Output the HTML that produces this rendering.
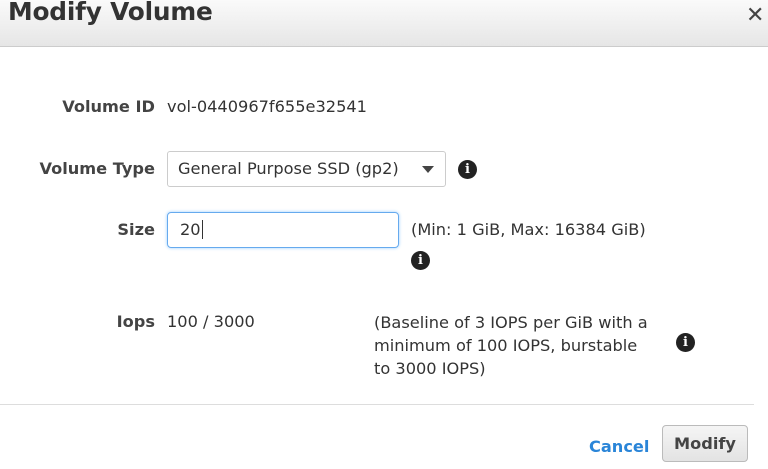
<!DOCTYPE html>
<html><head><style>
body{margin:0;width:768px;height:469px;background:#fff;font-family:"DejaVu Sans","Liberation Sans",sans-serif;color:#333;position:relative;overflow:hidden;font-size:16.2px}
.hdr{position:absolute;left:0;top:0;width:768px;height:46px;background:linear-gradient(#fafafa,#e6e6e6);border-bottom:1px solid #ccc}
.hdr h1{margin:0;position:absolute;left:8px;top:-3px;font-size:24.8px;font-weight:bold;color:#333;letter-spacing:-0.2px}
.x{position:absolute;left:746px;top:3px;font-size:22px;color:#444}
.a{position:absolute;white-space:nowrap}
.lbl{position:absolute;right:613px;font-weight:bold;color:#444;white-space:nowrap}
.sel{position:absolute;left:167px;top:151px;width:279px;height:36px;border:1px solid #ccc;border-radius:3px;box-sizing:border-box}
.inp{position:absolute;left:167px;top:212px;width:232px;height:36px;border:1px solid #66aaee;border-radius:4px;box-sizing:border-box;box-shadow:0 0 3px #9cf}
.i{position:absolute;width:19px;height:19px;border-radius:50%;background:#222;color:#fff;font:bold 13px "DejaVu Serif",serif;text-align:center;line-height:19px}
.btn{position:absolute;left:662px;top:425px;width:86px;height:37px;border:1px solid #bbb;border-radius:4px;background:linear-gradient(#f5f5f5,#e3e3e3);box-sizing:border-box;font-weight:bold;color:#444;text-align:center;line-height:35px}
</style></head><body>
<div class="hdr"><h1>Modify Volume</h1><div class="x">✕</div></div>
<div class="lbl" style="top:97px">Volume ID</div><div class="a" style="left:167px;top:97px">vol-0440967f655e32541</div>
<div class="lbl" style="top:159px">Volume Type</div>
<div class="sel"><span class="a" style="left:10px;top:7px">General Purpose SSD (gp2)</span><span class="a" style="left:254px;top:14px;width:0;height:0;border-left:6px solid transparent;border-right:6px solid transparent;border-top:7px solid #444"></span></div>
<div class="i" style="left:458px;top:160px">i</div>
<div class="lbl" style="top:220px">Size</div>
<div class="inp"><span class="a" style="left:12px;top:7px">20<span style="border-left:1px solid #333;margin-left:1px"></span></span></div>
<div class="a" style="left:411px;top:220px">(Min: 1 GiB, Max: 16384 GiB)</div>
<div class="i" style="left:411px;top:251px">i</div>
<div class="lbl" style="top:312px">Iops</div><div class="a" style="left:167px;top:312px">100 / 3000</div>
<div class="a" style="left:374px;top:311px;line-height:23px">(Baseline of 3 IOPS per GiB with a<br>minimum of 100 IOPS, burstable<br>to 3000 IOPS)</div>
<div class="i" style="left:676px;top:333px">i</div>
<div class="a" style="left:0;top:404px;width:754px;height:1px;background:#ddd"></div>
<div class="a" style="left:589px;top:437px;color:#2a85d8;font-weight:bold">Cancel</div>
<div class="btn">Modify</div>
</body></html>
